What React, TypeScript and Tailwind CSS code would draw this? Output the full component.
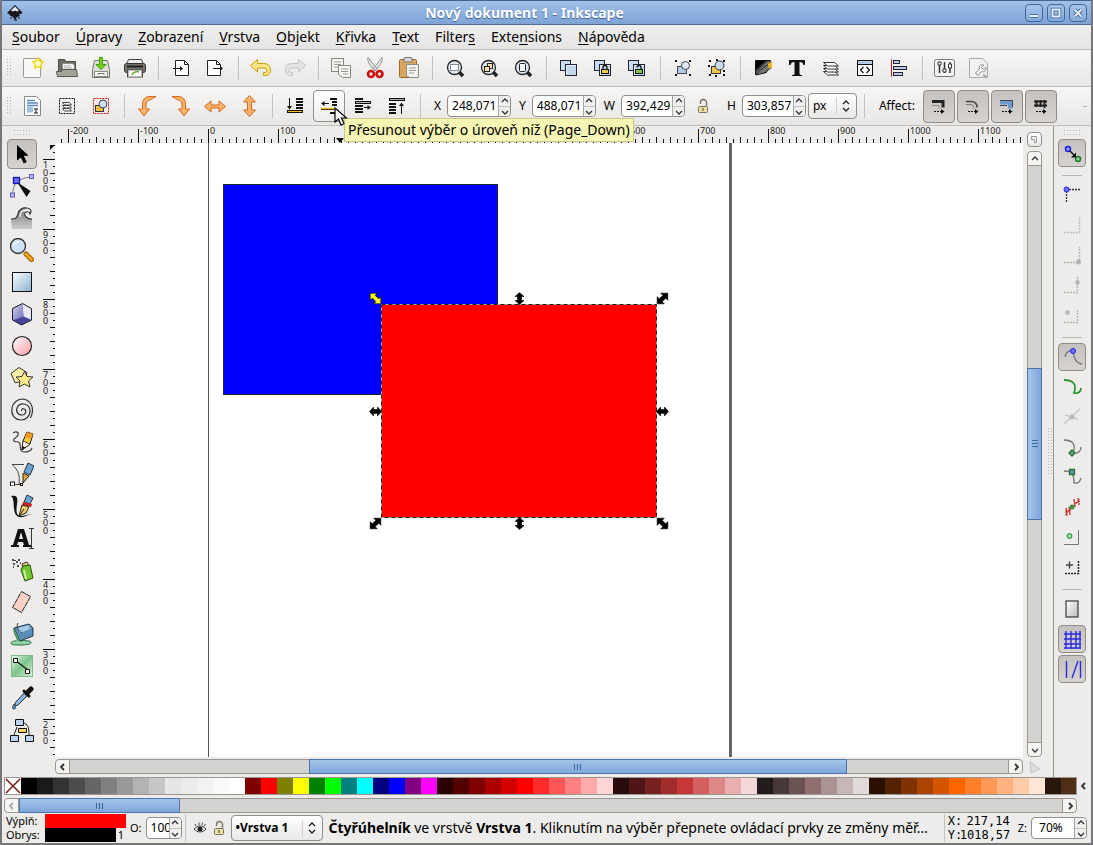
import type { ReactNode } from "react";
import clsx from "clsx";

const menus = [
  ["", "S", "oubor"],
  ["", "Ú", "pravy"],
  ["", "Z", "obrazení"],
  ["", "V", "rstva"],
  ["", "O", "bjekt"],
  ["", "K", "řivka"],
  ["", "T", "ext"],
  ["Filter", "s", ""],
  ["Exte", "n", "sions"],
  ["", "N", "ápověda"],
];

const palette = [
  "#000000", "#1a1a1a", "#333333", "#4d4d4d", "#666666", "#808080", "#999999",
  "#b3b3b3", "#c6c6c6", "#e6e6e6", "#ececec", "#f2f2f2", "#f9f9f9", "#ffffff",
  "#800000", "#ff0000", "#808000", "#ffff00", "#008000", "#00ff00", "#008080",
  "#00ffff", "#000080", "#0000ff", "#800080", "#ff00ff", "#2b0000", "#550000",
  "#800000", "#aa0000", "#d40000", "#ff0000", "#ff2a2a", "#ff5555", "#ff8080",
  "#ffaaaa", "#ffd5d5", "#280b0b", "#501616", "#782121", "#a02c2c", "#c83737",
  "#d35f5f", "#de8787", "#e9afaf", "#f4d7d7", "#241c1c", "#483737", "#6c5353",
  "#916f6f", "#ac9393", "#c8b7b7", "#e3dbdb", "#2b1100", "#552200", "#803300",
  "#aa4400", "#d45500", "#ff6600", "#ff7f2a", "#ff9955", "#ffb380", "#ffccaa",
  "#ffe6d5", "#28170b", "#502d16",
];

function Svg({ children }: { children: ReactNode }) {
  return (
    <svg width="24" height="24" viewBox="0 0 24 24" fill="none" className="shrink-0">
      {children}
    </svg>
  );
}

/* Shared bits that several icons are built from */
const Page = ({ x = 2 }: { x?: number }) => (
  <path d={`M${x + 0.5} 4.5h9l4 4v11h-13z M${x + 9.5} 4.5v4h4`} fill="#fdfdfd" stroke="#222" />
);

const Magnifier = () => (
  <>
    <path d="M16 16l4 4" stroke="#222" strokeWidth="3.5" />
    <circle cx="11.5" cy="11.5" r="7" fill="#dde8f4" stroke="#222" strokeWidth="1.3" />
  </>
);

const Squares = () => (
  <>
    <rect x="3.5" y="4.5" width="10" height="10" fill="#c9dcec" stroke="#223" />
    <rect x="8.5" y="8.5" width="11" height="11" fill="#c3d7ea" stroke="#223" />
    <path d="M9.5 18.5v-9h9" stroke="#eaf2f9" />
  </>
);

const Handles = () => (
  <path
    d="M4 4h2v2h-2zM18 4h2v2h-2zM4 18h2v2h-2zM18 18h2v2h-2z"
    fill="#111"
  />
);

const icons: Record<string, ReactNode> = {
  new: (
    <>
      <rect x="2.5" y="2.5" width="17" height="19" rx="1" fill="#f8f8f6" stroke="#999a96" />
      <path d="M17 2l1.7 3.2 3.6.6-2.5 2.6.5 3.7-3.3-1.6-3.3 1.6.5-3.7-2.5-2.6 3.6-.6z" fill="#fffbd0" stroke="#eed500" strokeWidth="1.3" />
    </>
  ),
  open: (
    <>
      <path d="M3.5 15V3.500h6l2 2h9V15" fill="#6b6c62" stroke="#4c4d45" />
      <path d="M7.500 7.500h10l2 2v7h-12z" fill="#f4f4f2" stroke="#8b8c86" />
      <path d="M9 10h7M9 12h8" stroke="#aaa" />
      <path d="M1.500 15.500h5l1-2h14l1 7h-20z" fill="#a3a498" stroke="#55564d" />
    </>
  ),
  save: (
    <>
      <path d="M5.500 4.500h13l2 9v8h-17v-8z" fill="#deded9" stroke="#777871" />
      <rect x="5.500" y="15.500" width="13" height="5" fill="#f7f7f5" stroke="#8d8e88" />
      <path d="M9 19v-1.500h6V19" stroke="#777" />
      <path d="M10.500 1.500h3v7h3.500l-5 5-5-5h3.500z" fill="#73d216" stroke="#429a06" />
    </>
  ),
  print: (
    <>
      <path d="M5.500 3.500h13l2 5h-17z" fill="#eee" stroke="#444" />
      <rect x="1.500" y="7.500" width="21" height="9" rx="2" fill="#74756e" stroke="#333" />
      <path d="M4 10.500h16" stroke="#222" strokeWidth="2" />
      <path d="M4 13.500h16v8h-16z" fill="#444" />
      <path d="M5.500 14.500h13v6h-13z" fill="#fff" stroke="#bbb" />
      <path d="M9 19c1-3 5-4 7-3" stroke="#6cae2c" strokeWidth="1.500" />
    </>
  ),
  import: (
    <>
      <Page x={6} />
      <path d="M4 12.500h8" stroke="#111" />
      <path d="M11 10l3 2.500-3 2.500z" fill="#111" />
    </>
  ),
  export: (
    <>
      <Page x={4} />
      <path d="M10 12.500h8" stroke="#111" />
      <path d="M17 10l3 2.500-3 2.500z" fill="#111" />
    </>
  ),
  undo: (
    <path d="M1.500 9.500l7-6v4h6c5 0 7 3 7 6.500 0 3-2 5-4 5.500h-3v-3c3 .5 3.500-1 3.500-2.500s-1-2-3.500-2h-6v4z" fill="#f7e68a" stroke="#c4a000" />
  ),
  redo: (
    <path d="M22.500 9.500l-7-6v4h-6c-5 0-7 3-7 6.500 0 3 2 5 4 5.500h3v-3c-3 .5-3.500-1-3.500-2.500s1-2 3.500-2h6v4z" fill="#e4e4e2" stroke="#c4c5c2" />
  ),
  copy: (
    <>
      <rect x="2.500" y="2.500" width="12" height="13" fill="#f3f3f1" stroke="#85867f" />
      <path d="M5 6h7M5 8.500h7M5 11h7" stroke="#9a9b96" />
      <path d="M9.500 9.500h12v12h-8l-4-3z" fill="#f3f3f1" stroke="#85867f" />
      <path d="M12 13h7M12 15.500h7M14 18h5" stroke="#9a9b96" />
    </>
  ),
  cut: (
    <>
      <path d="M5 1.500c-1 4 2 8 7 13l2-2C10 9 8 5 5 1.500zM19 1.500c1 4-2 8-7 13l-2-2C14 9 16 5 19 1.500z" fill="#e8e8e8" stroke="#7a7a7a" strokeWidth=".8" />
      <ellipse cx="8" cy="18" rx="3" ry="3" stroke="#cc0f0f" strokeWidth="2.600" />
      <ellipse cx="16.500" cy="18" rx="3" ry="3" stroke="#cc0f0f" strokeWidth="2.600" />
    </>
  ),
  paste: (
    <>
      <rect x="2.500" y="3.500" width="17" height="18" rx="1" fill="#d9a662" stroke="#9c6a2b" />
      <rect x="7" y="1.500" width="8" height="4.500" rx="1" fill="#d5d5d3" stroke="#777" />
      <path d="M9.500 8.500h12v13h-9l-3-2z" fill="#f3f3f1" stroke="#8c8d87" />
      <path d="M12 12h7M12 14.500h7M12 17h5" stroke="#9a9b96" />
    </>
  ),
  zoomSelection: (
    <>
      <Magnifier />
      <rect x="7.500" y="8.500" width="8" height="6" fill="#fff" stroke="#222" strokeDasharray="1 1" />
    </>
  ),
  zoomDrawing: (
    <>
      <Magnifier />
      <rect x="10.500" y="7.500" width="5" height="5" fill="#f6e3a5" stroke="#222" />
      <rect x="7.500" y="10.500" width="5" height="5" fill="#f6e3a5" stroke="#222" />
    </>
  ),
  zoomPage: (
    <>
      <Magnifier />
      <rect x="8.500" y="7.500" width="6" height="8" rx="1" fill="#f6f6f6" stroke="#222" />
    </>
  ),
  duplicate: <Squares />,
  clone: (
    <>
      <Squares />
      <path d="M12 13v-1.500a2 2 0 0 1 4 0V13" stroke="#111" strokeWidth="1.300" />
      <rect x="10.500" y="13.500" width="7" height="4" fill="#f4c94c" stroke="#111" />
    </>
  ),
  unlink: (
    <>
      <Squares />
      <path d="M12 11.500a2 2 0 0 1 4 0V14" stroke="#111" strokeWidth="1.300" />
      <rect x="10.500" y="13.500" width="7" height="4" fill="#7ec84f" stroke="#111" />
    </>
  ),
  group: (
    <>
      <rect x="6.500" y="10.500" width="9" height="7" fill="#b4cbe2" stroke="#445" />
      <circle cx="14.500" cy="9.500" r="4" fill="#dfe9f3" stroke="#445" />
      <Handles />
    </>
  ),
  ungroup: (
    <>
      <rect x="6.500" y="10.500" width="9" height="7" fill="#f3c74a" stroke="#333" />
      <circle cx="14.500" cy="9.500" r="4.500" fill="#c8daec" stroke="#333" />
      <path d="M4 4h2v2h-2zM18 4h2v2h-2zM4 18h2v2h-2zM18 18h2v2h-2zM3 9h2v2h-2zM11 3h2v2h-2zM18 14h2v2h-2zM10 19h2v2h-2z" fill="#111" />
    </>
  ),
  fill: (
    <>
      <defs>
        <linearGradient id="fillPage" x1="0" y1="0" x2="1" y2="1">
          <stop offset=".3" stopColor="#000" />
          <stop offset=".7" stopColor="#fff" />
        </linearGradient>
      </defs>
      <path d="M4.500 4.500h15l-4 12-11 2z" fill="url(#fillPage)" stroke="#111" />
      <path d="M5 19c2-3 3-4 6-6l9-7v6l-7 5z" fill="#777" stroke="#222" />
      <path d="M17 8l4-3v6l-3 2z" fill="#f5b51c" />
    </>
  ),
  text: (
    <path d="M4 4h16v5h-1.500c-.5-2-1.500-3-4-3v11.500c0 1.500 1 1.500 2.500 1.500v1H7v-1c1.500 0 2.500 0 2.500-1.500V6c-2.500 0-3.500 1-4 3H4z" fill="#111" />
  ),
  layers: (
    <>
      <path d="M4.500 15.500h11l4 3.500h-11z" fill="#fff" stroke="#333" />
      <path d="M4.500 12.500h11l4 3.500h-11z" fill="#fff" stroke="#333" />
      <path d="M4.500 9.500h11l4 3.500h-11z" fill="#fff" stroke="#333" />
      <path d="M4.500 6.500h11l4 3.500h-11z" fill="#fff" stroke="#333" />
    </>
  ),
  xml: (
    <>
      <rect x="4.500" y="4.500" width="15" height="15" fill="#fff" stroke="#111" />
      <path d="M5 6.500h14" stroke="#a8c4e2" strokeWidth="2.500" />
      <path d="M4 8.500h16" stroke="#111" />
      <path d="M10.500 11l-3 3 3 3M13.500 11l3 3-3 3" stroke="#111" strokeWidth="1.200" />
    </>
  ),
  align: (
    <>
      <path d="M4.500 3.500v17" stroke="#cc1515" />
      <rect x="6.500" y="4.500" width="6" height="3" fill="#b6cde3" stroke="#223" />
      <rect x="6.500" y="10.500" width="13" height="3" fill="#b6cde3" stroke="#223" />
      <rect x="6.500" y="16.500" width="9" height="3" fill="#b6cde3" stroke="#223" />
    </>
  ),
  preferences: (
    <>
      <rect x="1.500" y="3.500" width="20" height="17" rx="2" fill="#f3f3f1" stroke="#777" />
      <path d="M6.500 6v11M11.500 6v11M17 6v11" stroke="#333" strokeWidth="1.500" />
      <path d="M5 6h3v3H5zM10 13h3v3h-3zM15.500 8h3v4h-3z" fill="#fff" stroke="#333" />
    </>
  ),
  docPreferences: (
    <>
      <path d="M2.500 2.500h13l5 5v14h-18z" fill="#f0f0ee" stroke="#aaaba8" />
      <path d="M8.500 17l4-4c-1-3 1-5 4-4l-2 2.500 2 2 2.500-2c.5 3-1.500 5-4.500 4l-3.500 4z" fill="#fafafa" stroke="#888" />
      <path d="M16 19l4 2" stroke="#aaa" strokeWidth="2" />
    </>
  ),
  selectAll: (
    <>
      <path d="M3.500 2.500h12l4 4v15h-16z" fill="#fff" stroke="#8a8b86" />
      <path d="M6 6.500h8M6 9h11M6 11.500h11M6 14h4M6 16.500h4" stroke="#5a88bf" strokeWidth="1.600" />
      <path d="M6 12.500h6v6H6z" fill="#9fbfe0" />
      <path d="M13 15h4M15 15v4M13 19h4" stroke="#111" />
    </>
  ),
  selectLayers: (
    <>
      <rect x="4.500" y="4.500" width="15" height="15" stroke="#111" strokeDasharray="2 1" />
      <path d="M7.500 14.500h7l2 2.500h-7zM7.500 11.500h7l2 2.500h-7zM7.500 8.500h7l2 2.500h-7z" fill="#fff" stroke="#444" />
    </>
  ),
  deselect: (
    <>
      <rect x="4.500" y="4.500" width="15" height="15" stroke="#d01616" strokeDasharray="2 1" />
      <rect x="6.500" y="11.500" width="8" height="6" fill="#f4bd3b" stroke="#333" />
      <circle cx="14" cy="10" r="4" fill="#cfdeee" stroke="#445" />
    </>
  ),
  rotateLeft: (
    <path d="M21 2.500h-6c-5 0-7.500 3-7.500 8V15h-4l5.500 7 5.500-7h-3.500v-4c0-3 1.500-5 4-5z" fill="#fbb26a" stroke="#d2691e" />
  ),
  rotateRight: (
    <path d="M3 2.500h6c5 0 7.500 3 7.500 8V15h4l-5.500 7-5.500-7h3.500v-4c0-3-1.500-5-4-5z" fill="#fbb26a" stroke="#d2691e" />
  ),
  flipH: (
    <path d="M1.500 12.500l6.500-5.500v4h8v-4l6.500 5.500-6.500 5.500v-4h-8v4z" fill="#fbb26a" stroke="#d2691e" />
  ),
  flipV: (
    <path d="M12.500 1.500l-6 6.500h4v8h-4l6 6.500 6-6.500h-4v-8h4z" fill="#fbb26a" stroke="#d2691e" />
  ),
  toBottom: (
    <>
      <path d="M6.500 4v9" stroke="#111" />
      <path d="M4 12h5l-2.500 3.500z" fill="#111" />
      <path d="M13 5h7M13 8h7M13 11h7M13 14h7" stroke="#111" strokeWidth="2" />
      <path d="M4 17.500h16" stroke="#111" strokeWidth="3" />
      <path d="M5 17.500h14" stroke="#f3bd2e" />
    </>
  ),
  lower: (
    <>
      <path d="M6 9.500h6" stroke="#111" />
      <path d="M7.500 7v5l-3.500-2.500z" fill="#111" />
      <path d="M13 5h7M15 8h5M15 11h5M4 15h13M13 19h7" stroke="#111" strokeWidth="2" />
      <path d="M4 14.500h13" stroke="#f3bd2e" strokeWidth="1.500" />
    </>
  ),
  raise: (
    <>
      <path d="M4 5h8M4 12h8M4 15h8M4 18h8" stroke="#111" strokeWidth="2" />
      <path d="M4 8.500h16" stroke="#111" strokeWidth="3" />
      <path d="M5 8.500h14" stroke="#bbb" />
      <path d="M13 13.500h5" stroke="#111" />
      <path d="M16.500 11v5l3.500-2.500z" fill="#111" />
    </>
  ),
  toTop: (
    <>
      <path d="M4 5.500h16" stroke="#111" strokeWidth="3" />
      <path d="M5 5.500h14" stroke="#aaa" />
      <path d="M4 10h7M4 13h7M4 16h7M4 19h7" stroke="#111" strokeWidth="2" />
      <path d="M16.500 11v9" stroke="#111" />
      <path d="M14 12h5l-2.500-3.500z" fill="#111" />
    </>
  ),
  unlocked: (
    <>
      <path d="M9.500 10V8.500a3 3 0 0 1 6 0V12" stroke="#77735e" strokeWidth="1.400" />
      <rect x="7.500" y="12.500" width="9" height="6" rx="1" fill="#eee0a0" stroke="#77735e" />
      <path d="M12 14v3" stroke="#77735e" strokeWidth="1.500" />
    </>
  ),
  affectStroke: (
    <>
      <path d="M5 7.500h11v6" stroke="#222" strokeWidth="3" />
      <path d="M5 11.500h7v3" stroke="#888" />
      <path d="M7 17.500h7" stroke="#111" strokeDasharray="2 1" />
      <path d="M14 15v5l3.500-2.500z" fill="#111" />
    </>
  ),
  affectCorners: (
    <>
      <path d="M5 7.500h5c4 0 6 2 6 6" stroke="#444" strokeWidth="1.500" />
      <path d="M5 10.500h4c3 0 4 1 4 4" stroke="#777" />
      <path d="M7 17.500h7" stroke="#111" strokeDasharray="2 1" />
      <path d="M14 15v5l3.500-2.500z" fill="#111" />
    </>
  ),
  affectGradient: (
    <>
      <path d="M5 8.500h10v6" stroke="#6d9bd0" strokeWidth="4" />
      <path d="M5 6.500h12.500v7M5 11.500h7" stroke="#445" />
      <path d="M7 17.500h7" stroke="#111" strokeDasharray="2 1" />
      <path d="M14 15v5l3.500-2.500z" fill="#111" />
    </>
  ),
  affectPattern: (
    <>
      <path d="M5 7.500h13M5 11.500h13M7.500 6v7M11.500 6v7M15.500 6v8" stroke="#222" strokeWidth="2" />
      <path d="M7 17.500h7" stroke="#111" strokeDasharray="2 1" />
      <path d="M14 15v5l3.500-2.500z" fill="#111" />
    </>
  ),
  selector: <path d="M7 3v15.500l3.800-3 3 6 3-1.500-3-6 4.700-.5z" fill="#000" />,
  node: (
    <>
      <path d="M2.500 20C3 10 8 4 21 3" stroke="#777" />
      <rect x=".5" y="19" width="4" height="4" fill="#b8b8ff" stroke="#5a5ad8" />
      <rect x="19.500" y=".5" width="4" height="4" fill="#b8b8ff" stroke="#5a5ad8" />
      <rect x="3.500" y="3.500" width="6" height="6" fill="#6a6aff" stroke="#1414b8" strokeWidth="1.300" />
      <path d="M7 8l13.500 9-4 6z" fill="#111" />
    </>
  ),
  tweak: (
    <>
      <defs>
        <linearGradient id="waveFill" x1="0" y1="0" x2="0" y2="1">
          <stop stopColor="#777" />
          <stop offset="1" stopColor="#ccc" />
        </linearGradient>
      </defs>
      <path d="M1 13c5 0 6-1 7-5 1-5 5-7 9-6-4 3-5 10 5 11v10H2z" fill="url(#waveFill)" />
      <path d="M1 13c5 0 6-1 7-5 1-5 5-7 9-6 4 0 5 4 3 6 0-2-2-3-4-2-3 1-1 7 6 7" stroke="#333" strokeWidth="1.200" />
      <path d="M10 11c0-5 2-7 6-7 2 0 3 1 3 2" stroke="#eee" strokeWidth="1.300" />
    </>
  ),
  zoom: (
    <>
      <path d="M16 16l5.500 5.500" stroke="#a05a00" strokeWidth="5" strokeLinecap="round" />
      <path d="M16 16l5.500 5.500" stroke="#f5a81c" strokeWidth="3" strokeLinecap="round" />
      <circle cx="8" cy="8" r="7.500" fill="#cfe2f5" stroke="#333" strokeWidth="1.300" />
      <path d="M3 8c1-3 3-4 6-4" stroke="#fff" strokeWidth="1.500" />
    </>
  ),
  rect: (
    <>
      <defs>
        <linearGradient id="rectFill" x1="0" y1="0" x2="1" y2="1">
          <stop stopColor="#fbfdff" />
          <stop offset="1" stopColor="#8bb0d4" />
        </linearGradient>
      </defs>
      <rect x="2.500" y="2.500" width="19" height="19" fill="url(#rectFill)" stroke="#111" />
    </>
  ),
  box3d: (
    <>
      <defs>
        <linearGradient id="boxFill" x1="0" y1="0" x2="1" y2="1">
          <stop stopColor="#d5d5f5" />
          <stop offset="1" stopColor="#6a6ab8" />
        </linearGradient>
      </defs>
      <path d="M2.500 6.500l10-5 9 5v11.500l-10 5-9-5z" fill="#8686c4" />
      <path d="M12.500 2l9 5v11l-8-3.500z" fill="#e9e9fb" />
      <path d="M3 18l10.500-3.500 8 3.500-10 5z" fill="#4646a0" />
      <path d="M3 7l9.500-5 1 12.500L3 18z" fill="url(#boxFill)" />
      <path d="M2.500 6.500l10-5 9 5v11.500l-10 5-9-5z" stroke="#222" />
    </>
  ),
  ellipse: (
    <>
      <defs>
        <linearGradient id="ellipseFill" x1="0" y1="0" x2="1" y2="1">
          <stop stopColor="#fff" />
          <stop offset="1" stopColor="#ff9aa5" />
        </linearGradient>
      </defs>
      <circle cx="12" cy="12" r="9.500" fill="url(#ellipseFill)" stroke="#222" strokeWidth="1.200" />
    </>
  ),
  star: (
    <>
      <path d="M9 1.500l8 5-2 9-10 1-4-9z" fill="#fbf0a8" stroke="#333" />
      <path d="M14.500 5.500l2.500 5 6 .5-4.500 4 1.500 6-5.500-3-5.500 3 1-6-4-4 6-.5z" fill="#fdec84" stroke="#333" />
    </>
  ),
  spiral: (
    <path d="M12 13c-1-1 0-3 2-2 3 1 2 6-2 6-5 0-7-5-4-9 4-4 11-2 12 4 .5 6-4 10-9 10-7-.5-10-6-9-12C3 4 8 1 13 1c7 1 10 7 9.500 12 0 3-1 5-2 7" stroke="#333" strokeWidth="1.200" />
  ),
  pencil: (
    <>
      <path d="M3 3c3-2 6-1 5 2-1 3-6 4-4 6s5-1 6 3-1 7 4 8c4 0 7-1 8-4" stroke="#444" strokeWidth="1.200" />
      <path d="M12 20l1-9 4-9 6 2-3 10z" fill="#f8c93a" stroke="#222" />
      <path d="M17 2l6 2-2 5-6-2z" fill="#f39a1c" />
      <path d="M12 20l1-9 7 3z" fill="#fff6dd" stroke="#222" strokeWidth=".8" />
      <path d="M12 20l.5-4 3 1.500z" fill="#111" />
    </>
  ),
  pen: (
    <>
      <path d="M2 2.500h12M2 2.500c7 6 8 12 7 20M4 22.500h8" stroke="#444" />
      <rect x=".5" y="20" width="4" height="4" fill="#fff" stroke="#111" />
      <rect x="10.500" y="21.500" width="2" height="2" fill="#fff" stroke="#111" />
      <path d="M14 10l4-9 6 3-4 9z" fill="#6fa3d0" stroke="#234" />
      <path d="M13 11l6 3-6 7z" fill="#e6a83c" stroke="#222" />
    </>
  ),
  calligraphy: (
    <>
      <path d="M1 2c6-1 7 1 6 8s-1 12 4 12c4 0 7-2 11-2-4 0-7 4-13 3C1 21 6 5 1 2z" fill="#111" />
      <path d="M14 8l3-7 6 3-3 6z" fill="#6fa3d0" stroke="#234" />
      <path d="M13 8l9 2-1 3-9-2z" fill="#d02020" />
      <path d="M12 11l7 2-3 6-7 3z" fill="#f5cc60" stroke="#222" />
      <path d="M9 22l5-7" stroke="#222" />
    </>
  ),
  textTool: (
    <>
      <path d="M8 3h6l5 16h2v2h-8v-2h1l-1-3H8l-1 3h2v2H1v-2h2zM9 13h4l-2-7z" fill="#111" fillRule="evenodd" />
      <path d="M19 2.500h5M19 22.500h5M21.500 3v19" stroke="#333" />
    </>
  ),
  spray: (
    <>
      <path d="M2 2h2M6 4h2M3 6h2M8 2h2M7 8h2M3 9h1M10 5h1M5 2v1" stroke="#222" strokeWidth="1.600" />
      <path d="M12 6l5-2 2 4-6 2z" fill="#f0d080" stroke="#333" />
      <path d="M11 12l2-4 7-1 3 13-8 3z" fill="#73c832" stroke="#264e0a" />
      <path d="M14 12l2 9" stroke="#c9f09b" strokeWidth="2" />
    </>
  ),
  eraser: <path d="M11.500 1.500l9 5-9 16-9-5z" fill="#fbd3c6" stroke="#222" strokeDasharray="5 .5" />,
  bucket: (
    <>
      <path d="M1 21c0-2 5-2 6-3l3 0c1 1 10 0 11 2s-4 3-10 3S1 23 1 21z" fill="#8fd3a5" stroke="#2f6e44" />
      <path d="M4 10c0 4 2 5 3 9l2 0c0-5-2-6-1-10z" fill="#8fd3a5" />
      <path d="M4 6l15-4 4 4v8l-13 5z" fill="#5b8fb8" stroke="#1f3446" />
      <path d="M4 6l6 13-2-1-4-8z" fill="#8fd3a5" stroke="#2f6e44" />
      <path d="M7 6l12-3 1 4-10 4z" fill="#a8cbe6" />
      <path d="M12 11c-4-2-6-7-4-10" stroke="#333" />
    </>
  ),
  gradient: (
    <>
      <defs>
        <linearGradient id="gradFill" x1="0" y1="0" x2="1" y2="1">
          <stop stopColor="#eefaf0" />
          <stop offset=".5" stopColor="#7cc48a" />
          <stop offset="1" stopColor="#dff3e2" />
        </linearGradient>
      </defs>
      <rect x="1.500" y="1.500" width="21" height="21" fill="url(#gradFill)" stroke="#7cbd88" />
      <path d="M6 7l12 9" stroke="#111" strokeWidth="1.200" />
      <path d="M3.500 4.500h4v4h-4zM15.500 15.500h4v4h-4z" fill="#fff" stroke="#111" />
    </>
  ),
  dropper: (
    <>
      <path d="M15 6l3 3-10 10-3 1v-3z" fill="#8db6de" stroke="#234" />
      <path d="M14 5l5 5" stroke="#111" strokeWidth="3" strokeLinecap="round" />
      <path d="M17 7l4-4" stroke="#111" strokeWidth="5" strokeLinecap="round" />
      <path d="M4 18c-2 3-2 5 0 5s2-2 0-5z" fill="#5e93c8" stroke="#234" strokeWidth=".8" />
    </>
  ),
  connector: (
    <>
      <path d="M7 9L4 17M13 5c5 1 6 4 6 12" stroke="#222" />
      <path d="M5.500 1.500h8v6h-8zM.5 17.500h8v6h-8zM15.500 17.500h8v6h-8z" fill="#b9d3f0" stroke="#111" />
      <path d="M8.500 10.500h8v4h-8z" fill="#f8cf5c" stroke="#111" />
    </>
  ),
  snap: (
    <>
      <circle cx="8" cy="8" r="2.500" fill="#9b9bff" stroke="#2020e8" strokeWidth="1.500" />
      <circle cx="18" cy="18" r="2.500" fill="#9bcf9b" stroke="#1d7a2b" strokeWidth="1.500" />
      <path d="M10 10l4 4" stroke="#111" strokeWidth="1.500" />
      <path d="M16 11.500v5h-5z" fill="#111" />
    </>
  ),
  snapBox: (
    <>
      <path d="M6.500 8v12M6 6.500h14" stroke="#333" strokeWidth="1.300" strokeDasharray="2 1" />
      <circle cx="6.500" cy="6.500" r="2.500" fill="#7070ff" stroke="#2020e8" />
    </>
  ),
  snapEdge: <path d="M4 19.500h15.500V4" stroke="#c0bfbd" strokeWidth="1.300" strokeDasharray="2 1" />,
  snapCorner: (
    <>
      <path d="M4 19.500h15.500V4" stroke="#b4b3b1" strokeWidth="1.300" strokeDasharray="2 1" />
      <circle cx="18.500" cy="19" r="2.500" fill="#b4b3b1" />
    </>
  ),
  snapEdgeMid: (
    <>
      <path d="M4 19.500h13.500V4" stroke="#b4b3b1" strokeWidth="1.300" strokeDasharray="2 1" />
      <path d="M17.500 6l2.500 3.500-2.500 3.500-2.500-3.500z" fill="#b4b3b1" />
    </>
  ),
  snapCenter: (
    <>
      <path d="M4 19.500h13.500V6" stroke="#b4b3b1" strokeWidth="1.300" strokeDasharray="2 1" />
      <circle cx="7.500" cy="9.500" r="2.500" fill="#c0bfbd" />
    </>
  ),
  snapNodes: (
    <>
      <path d="M5 12c1-6 5-7 8-6 1 6 2 12 9 13" stroke="#777" strokeWidth="1.300" />
      <circle cx="13" cy="6" r="2.500" fill="#7070ff" stroke="#2020e8" />
    </>
  ),
  snapPath: <path d="M4 5c10 0 13 5 10 13 5 1 7-2 7-5" stroke="#2f9435" strokeWidth="1.800" />,
  snapIntersect: (
    <>
      <path d="M4 19L20 4M5 10l13 4" stroke="#c4c3c1" strokeWidth="1.300" />
      <circle cx="12" cy="12" r="2.500" fill="#bbb" />
    </>
  ),
  snapCusp: (
    <>
      <path d="M4 5c10 0 12 6 9 13 5 1 8-2 8-6" stroke="#777" strokeWidth="1.300" />
      <path d="M12 15l3 3-3 3-3-3z" fill="#6a9ba0" stroke="#1d7a2b" strokeWidth="1.300" />
    </>
  ),
  snapSmooth: (
    <>
      <path d="M4 6c8 0 10 3 10 12 5 1 6-2 7-5" stroke="#777" strokeWidth="1.300" />
      <path d="M9.500 4.500h5v5h-5z" fill="#6a8bb0" stroke="#1d7a2b" strokeWidth="1.300" />
    </>
  ),
  snapMid: (
    <>
      <path d="M5 20L20 4" stroke="#777" />
      <path d="M6 13l1 8M9 12l1 8M14 4l1 8M18 3l1 7M5 17l6-2M14 9l6-3" stroke="#dc2a2a" strokeWidth="1.300" />
      <circle cx="12" cy="12" r="2.500" fill="#3f9048" />
    </>
  ),
  snapObjCenter: (
    <>
      <path d="M4 19.500h14.500V5" stroke="#777" />
      <circle cx="9.500" cy="11" r="2.500" fill="#9bdb9b" stroke="#1d8a2b" />
    </>
  ),
  snapRotation: (
    <>
      <path d="M5 18.500h13.500V5" stroke="#222" strokeWidth="1.500" strokeDasharray="2 1" />
      <path d="M9.500 6.500v7M6 10h7" stroke="#444" strokeWidth="1.500" />
    </>
  ),
  snapPage: (
    <>
      <defs>
        <linearGradient id="pageFill" x1="0" y1="0" x2="1" y2="1">
          <stop stopColor="#fff" />
          <stop offset="1" stopColor="#bbb" />
        </linearGradient>
      </defs>
      <rect x="6" y="4" width="12" height="16" fill="url(#pageFill)" stroke="#444" strokeWidth="1.300" />
    </>
  ),
  grid: <path d="M4 7h17M4 12h17M4 17h17M4 21h17M6 4v18M11 4v18M16 4v18M20 4v18" stroke="#2a2ae0" strokeWidth="1.400" />,
  guides: <path d="M6.500 4v17M20.500 4v17M12 21l6-17" stroke="#2a2ae0" strokeWidth="1.400" />,
};

const toolbar = [
  "new", "open", "save", "print", "|", "import", "export", "|", "undo", "redo", "|",
  "copy", "cut", "paste", "|", "zoomSelection", "zoomDrawing", "zoomPage", "|",
  "duplicate", "clone", "unlink", "|", "group", "ungroup", "|",
  "fill", "text", "layers", "xml", "align", "|", "preferences", "docPreferences",
];

const selectorBar = [
  "selectAll", "selectLayers", "deselect", "|", "rotateLeft", "rotateRight",
  "flipH", "flipV", "|", "toBottom", "lower", "raise", "toTop", "|",
];

const tools = [
  "selector", "node", "tweak", "zoom", "rect", "box3d", "ellipse", "star", "spiral",
  "pencil", "pen", "calligraphy", "textTool", "spray", "eraser", "bucket", "gradient",
  "dropper", "connector",
];

const snaps = [
  "snap", "|", "snapBox", "snapEdge", "snapCorner", "snapEdgeMid", "snapCenter", "|",
  "snapNodes", "snapPath", "snapIntersect", "snapCusp", "snapSmooth", "snapMid",
  "snapObjCenter", "snapRotation", "|", "snapPage", "grid", "guides",
];
const activeSnaps = ["snap", "snapNodes", "grid", "guides"];

const pressed =
  "rounded border border-[#8f8d8a] bg-linear-to-b from-[#c4c1be] to-[#d6d3d1]";
const raised = "border border-[#8f8e8b] bg-linear-to-b from-white to-[#e9e8e6]";
const bar = "flex items-center border-b border-[#bfbebb] bg-linear-to-b from-[#f7f6f5] to-[#e8e7e5]";

function Divider() {
  return (
    <div className="flex h-6 w-3 shrink-0 justify-center">
      <div className="w-px bg-[#c3c2bf]" />
    </div>
  );
}

function Grip() {
  return (
    <svg width="6" height="18" className="mx-1 shrink-0">
      {[0, 3, 6, 9, 12, 15].map((y) => (
        <path key={y} d={`M1 ${y + 0.5}h1M4 ${y + 0.5}h1`} stroke="#b3b1ae" />
      ))}
    </svg>
  );
}

function ToolButton({ name }: { name: string }) {
  return (
    <button type="button" aria-label={name} className="flex h-8 w-[34px] shrink-0 items-center justify-center">
      <Svg>{icons[name]}</Svg>
    </button>
  );
}

function Chevron({ dir, faint }: { dir: "up" | "down" | "left" | "right"; faint?: boolean }) {
  const d = {
    up: "M2 6l3-3 3 3",
    down: "M2 4l3 3 3-3",
    left: "M6 2L3 5l3 3",
    right: "M4 2l3 3-3 3",
  }[dir];
  return (
    <svg width="10" height="10" viewBox="0 0 10 10" fill="none" className="shrink-0">
      <path d={d} stroke={faint ? "#aaa" : "#333"} strokeWidth={dir === "left" || dir === "right" ? 1.8 : 1.3} />
    </svg>
  );
}

function SpinBox({ id, value, className }: { id: string; value: string; className: string }) {
  return (
    <div className={clsx("flex h-[22px] shrink-0 overflow-hidden rounded border border-[#8f8e8b] bg-white", className)}>
      <input id={id} defaultValue={value} className="w-0 min-w-0 flex-1 pl-1 text-xs outline-none" />
      <div className="flex w-3 flex-col border-l border-[#a9a8a5] bg-[#f0efed]">
        <button type="button" aria-label={`${id} up`} className="flex flex-1 items-center justify-center border-b border-[#c3c2bf]">
          <Chevron dir="up" />
        </button>
        <button type="button" aria-label={`${id} down`} className="flex flex-1 items-center justify-center">
          <Chevron dir="down" />
        </button>
      </div>
    </div>
  );
}

function Dropdown({ label, value, className }: { label: string; value: string; className: string }) {
  return (
    <div className={clsx("relative h-[26px] shrink-0 rounded", raised, className)}>
      <select aria-label={label} className="block h-full w-full appearance-none pl-1 text-xs outline-none [font-weight:inherit]">
        <option>{value}</option>
      </select>
      <div className="pointer-events-none absolute inset-y-1 right-0 flex w-5 flex-col items-center justify-center border-l border-[#cfcecb]">
        <svg width="8" height="12" viewBox="0 0 8 12" fill="none" stroke="#222" strokeWidth="1.300">
          <path d="M1 4l3-3 3 3M1 8l3 3 3-3" />
        </svg>
      </div>
    </div>
  );
}

function HScroll({ className, thumb, offFirst }: { className?: string; thumb: ReactNode; offFirst?: boolean }) {
  return (
    <div className={clsx("flex h-[15px] rounded border border-[#98968f] bg-[#d4d3d1]", className)}>
      <button type="button" aria-label="scroll left" className="flex w-[14px] items-center justify-center rounded-l border-r border-[#98968f] bg-[#f5f4f3]">
        <Chevron dir="left" faint={offFirst} />
      </button>
      {thumb}
      <button type="button" aria-label="scroll right" className="flex w-[14px] items-center justify-center rounded-r border-l border-[#98968f] bg-[#f5f4f3]">
        <Chevron dir="right" />
      </button>
    </div>
  );
}

const thumbX =
  "-my-px flex items-center justify-center border border-[#4c76ab] bg-linear-to-b from-[#a5c4ea] to-[#7fa7da]";

function Ribs() {
  return (
    <svg width="8" height="6">
      <path d="M.5 0v6M3.500 0v6M6.500 0v6" stroke="#3d6599" />
    </svg>
  );
}

function TopRuler() {
  const ticks = Array.from({ length: 240 }, (_, i) => i - 21);
  return (
    <svg className="block h-[17px] w-full overflow-hidden">
      {ticks.map((i) => (
        <path
          key={i}
          d={`M${153.5 + i * 7} 17v${i % 10 === 0 ? -14 : i % 2 === 0 ? -6 : -4}`}
          stroke="#111"
        />
      ))}
      {ticks
        .filter((i) => i % 10 === 0 && i >= -20 && i <= 110)
        .map((i) => (
          <text key={i} x={155 + i * 7} y="8" fontSize="9" fill="#222">
            {i * 10}
          </text>
        ))}
      <path d="M281 12h8l-4 5z" fill="#111" />
    </svg>
  );
}

function SideRuler() {
  const ticks = Array.from({ length: 120 }, (_, i) => i - 2);
  return (
    <svg className="h-full w-[13px] shrink-0 overflow-hidden">
      {ticks.map((i) => (
        <path
          key={i}
          d={`M13 ${16.5 + i * 7}h${i % 10 === 0 ? -12 : i % 2 === 0 ? -5 : -2}`}
          stroke="#111"
        />
      ))}
      {ticks
        .filter((i) => i % 10 === 0 && i >= 0 && i <= 80)
        .map((i) =>
          String(1000 - i * 10)
            .split("")
            .map((digit, n) => (
              <text key={`${i}-${n}`} x="1" y={25 + i * 7 + n * 8} fontSize="9" fill="#222">
                {digit}
              </text>
            )),
        )}
      <path d="M8 2h5l-5 5z" fill="#111" />
    </svg>
  );
}

function ScaleHandle({ x, y, turn, fill = "#000" }: { x: number; y: number; turn: number; fill?: string }) {
  return (
    <path
      d={
        turn % 90
          ? "M-7.500 0l5-5v3h5v-3l5 5-5 5v-3h-5v3z"
          : "M-6 0l4-4.500v2.500h4v-2.500l4 4.500-4 4.500v-2.500h-4v2.500z"
      }
      transform={`translate(${x} ${y}) rotate(${turn})`}
      fill={fill}
      stroke="#000"
      strokeWidth=".6"
    />
  );
}

function Canvas() {
  return (
    <svg className="block h-full w-full bg-white">
      <path d="M153.500 0v2000" stroke="#555" />
      <path d="M675.500 0v2000" stroke="#666" strokeWidth="3" />
      <rect x="168.500" y="41.500" width="274" height="210" fill="#0000ff" stroke="#223" />
      <rect x="327" y="162" width="275" height="212" fill="#ff0000" />
      <rect x="326.500" y="161.500" width="275" height="213" stroke="#a9a9a9" fill="none" />
      <rect x="326.500" y="161.500" width="275" height="213" stroke="#222" strokeDasharray="4 3" fill="none" />
      <ScaleHandle x={320.5} y={155.5} turn={45} fill="#ffff00" />
      <ScaleHandle x={607.5} y={155.5} turn={135} />
      <ScaleHandle x={320.5} y={380.5} turn={135} />
      <ScaleHandle x={607.5} y={380.5} turn={45} />
      <ScaleHandle x={464.5} y={155.5} turn={90} />
      <ScaleHandle x={464.5} y={380.5} turn={90} />
      <ScaleHandle x={320.5} y={268.5} turn={0} />
      <ScaleHandle x={607.5} y={268.5} turn={0} />
    </svg>
  );
}

function TitleBar() {
  const glyphs = ["M4 11h8", "M4.500 4.500h7v7h-7z", "M4.500 4.500l7 7M11.500 4.500l-7 7"];
  return (
    <header className="flex h-[25px] shrink-0 items-center border-t border-b border-t-[#46638c] border-b-[#4f6d99] bg-linear-to-b from-[#9fc0ea] to-[#7fa4d4] px-1">
      <svg width="18" height="18" viewBox="0 0 18 18">
        <path d="M9 1l7 7c1 1.500-1 2-3 2l1 2-3 1-2 3-2-3-4-2 1-1c-3 0-3-1-2-2z" fill="#15171c" />
        <path d="M9 2.500l4 4-2 1-2-1-2 1-2-1z" fill="#e9eef5" />
        <path d="M4 14h2M12 14h2M8 16h3" stroke="#111" />
      </svg>
      <h1 className="flex-1 text-center text-sm leading-5 font-bold text-white [text-shadow:0_1px_1px_#3c5f93]">
        Nový dokument 1 - Inkscape
      </h1>
      <div className="flex gap-1">
        {glyphs.map((d, i) => (
          <button
            key={d}
            type="button"
            aria-label={["minimize", "maximize", "close"][i]}
            className="flex size-[18px] items-center justify-center rounded border border-[#41659a] bg-linear-to-b from-[#a6c5ec] to-[#86abd9]"
          >
            <svg width="16" height="16" viewBox="0 0 16 16" fill="none">
              <path d={d} stroke="#35598e" strokeWidth="3.500" />
              <path d={d} stroke="#e6effa" strokeWidth="2" />
            </svg>
          </button>
        ))}
      </div>
    </header>
  );
}

function Coordinate({ name, value }: { name: string; value: string }) {
  return (
    <div className="flex items-center gap-1.5">
      <label htmlFor={name} className="shrink-0 text-xs">
        {name}
      </label>
      <SpinBox id={name} value={value} className="w-16" />
    </div>
  );
}

function SelectorBar() {
  return (
    <div className={clsx(bar, "relative z-10 h-[39px] shrink-0")}>
      <Grip />
      {selectorBar.map((name, i) =>
        name === "|" ? (
          <Divider key={i} />
        ) : name === "lower" ? (
          <div key={i} className="relative flex w-[34px] shrink-0 justify-center">
            <button
              type="button"
              aria-describedby="tip"
              aria-label="lower"
              className="flex size-8 items-center justify-center rounded border border-[#8f8e8b] bg-linear-to-b from-white to-[#eeedec]"
            >
              <Svg>{icons.lower}</Svg>
            </button>
            <div
              id="tip"
              role="tooltip"
              className="absolute top-7 left-8 flex h-6 items-center border border-[#c9c98a] bg-[#f6f6b4] px-[3px] text-sm whitespace-nowrap"
            >
              Přesunout výběr o úroveň níž (Page_Down)
            </div>
            <svg width="14" height="20" viewBox="0 0 14 20" className="absolute top-[17px] left-[22px]">
              <path d="M1 1v14l3.500-3 2.500 6 3-1.500-2.500-5.500h5z" fill="#fff" stroke="#000" strokeWidth="1.200" />
            </svg>
          </div>
        ) : (
          <ToolButton key={i} name={name} />
        ),
      )}
      <div className="ml-2 flex items-center gap-2">
        <Coordinate name="X" value="248,071" />
        <Coordinate name="Y" value="488,071" />
        <Coordinate name="W" value="392,429" />
      </div>
      <button type="button" aria-label="lock ratio" className="mx-1.5">
        <Svg>{icons.unlocked}</Svg>
      </button>
      <div className="ml-1.5 flex items-center gap-0.5">
        <Coordinate name="H" value="303,857" />
        <Dropdown label="unit" value="px" className="w-[49px]" />
        <Divider />
      </div>
      <span className="mx-2 text-xs">Affect:</span>
      <div className="flex gap-0.5">
        {["affectStroke", "affectCorners", "affectGradient", "affectPattern"].map((name) => (
          <button key={name} type="button" aria-label={name} aria-pressed="true" className={clsx("flex h-[33px] w-8 items-center justify-center", pressed)}>
            <Svg>{icons[name]}</Svg>
          </button>
        ))}
      </div>
      <div className="mr-1 ml-auto h-px w-1 bg-[#b3b1ae]" />
    </div>
  );
}

function Workspace() {
  return (
    <div className="flex min-h-0 flex-1">
      <nav className="flex w-10 shrink-0 flex-col items-center">
        <svg width="17" height="6" className="mt-1 mb-[3px] shrink-0">
          <path d="M0 .5h17M0 4.500h17" stroke="#b3b1ae" strokeDasharray="1 2" />
        </svg>
        {tools.map((name, i) => (
          <button
            key={name}
            type="button"
            aria-label={name}
            className={clsx("mb-0.5 flex size-[30px] shrink-0 items-center justify-center", i === 0 && pressed)}
          >
            <Svg>{icons[name]}</Svg>
          </button>
        ))}
      </nav>

      <div className="flex min-w-0 flex-1 flex-col">
        <div className="pl-[13px]">
          <TopRuler />
        </div>
        <div className="flex min-h-0 flex-1">
          <SideRuler />
          <div className="min-w-0 flex-1 overflow-hidden">
            <Canvas />
          </div>
        </div>
        <HScroll
          className="mt-0.5 mb-[3px] ml-[13px]"
          thumb={
            <>
              <div className="flex-[240]" />
              <div className={clsx(thumbX, "flex-[537]")}><Ribs /></div>
              <div className="flex-[162]" />
            </>
          }
        />
      </div>

      <div className="flex w-[30px] shrink-0 items-stretch">
        <div className="ml-1 flex w-[15px] flex-col pt-1.5">
          <button type="button" aria-label="guides" className={clsx("flex h-[15px] items-center justify-center rounded", raised)}>
            <svg width="7" height="9" fill="none"><path d="M.5 1.500h5v6h-2v-3h-3z" stroke="#999" /></svg>
          </button>
          <div className="mt-1 flex flex-1 flex-col rounded border border-[#98968f] bg-[#d4d3d1]">
            <button type="button" aria-label="scroll up" className="flex h-[14px] items-center justify-center rounded-t border-b border-[#98968f] bg-[#f5f4f3]">
              <Chevron dir="up" />
            </button>
            <div className="flex-[203]" />
            <div className="-mx-px flex flex-[151] items-center justify-center border border-[#4c76ab] bg-linear-to-r from-[#a5c4ea] to-[#7fa7da]">
              <svg width="6" height="8"><path d="M0 .5h6M0 3.500h6M0 6.500h6" stroke="#3d6599" /></svg>
            </div>
            <div className="flex-[223]" />
            <button type="button" aria-label="scroll down" className="flex h-[14px] items-center justify-center rounded-b border-t border-[#98968f] bg-[#f5f4f3]">
              <Chevron dir="down" />
            </button>
          </div>
          <svg width="15" height="20" viewBox="0 0 15 20" className="shrink-0">
            <path d="M3 5l10 7-9 4z" fill="#dcdddb" stroke="#c3c6c1" />
          </svg>
        </div>
        <div className="ml-1.5 flex items-center">
          <svg width="5" height="48">
            <path d="M.5 0v48M3.500 0v48" stroke="#b3b1ae" strokeDasharray="1 2" />
          </svg>
        </div>
      </div>

      <div className="flex w-[38px] shrink-0 flex-col items-center border-l border-[#98968f] pr-px">
        <svg width="17" height="6" className="mt-1 mb-[3px] shrink-0">
          <path d="M0 .5h17M0 4.500h17" stroke="#b3b1ae" strokeDasharray="1 2" />
        </svg>
        {snaps.map((name, i) =>
          name === "|" ? (
            <div key={i} className="flex h-3 w-5 shrink-0 items-center">
              <div className="h-px w-full bg-[#b9b7b4]" />
            </div>
          ) : (
            <button
              key={i}
              type="button"
              aria-label={name}
              className={clsx("mb-0.5 flex size-7 shrink-0 items-center justify-center", activeSnaps.includes(name) && pressed)}
            >
              <Svg>{icons[name]}</Svg>
            </button>
          ),
        )}
      </div>
    </div>
  );
}

function StatusBar() {
  return (
    <footer className="flex h-[30px] shrink-0 items-center pl-1 text-xs">
      <div className="flex w-[39px] shrink-0 flex-col text-[11px] leading-[14px]">
        <span>Výplň:</span>
        <span>Obrys:</span>
      </div>
      <div className="flex w-[81px] shrink-0 flex-col">
        <div className="h-3.5 bg-[#ff0000]" />
        <div className="flex h-3.5">
          <div className="flex-1 bg-black" />
          <span className="w-2.5 text-center text-[11px] leading-[14px]">1</span>
        </div>
      </div>
      <label htmlFor="opacity" className="mx-1 shrink-0 text-[11px]">
        O:
      </label>
      <SpinBox id="opacity" value="100" className="w-9" />
      <div className="mx-[3px] h-7 w-px bg-[#c3c2bf]" />
      <button type="button" aria-label="layer visible" className="ml-1">
        <svg width="14" height="14" viewBox="0 0 14 14" fill="none">
          <path d="M1 8c3-4 9-4 12 0-3 4-9 4-12 0z" fill="#ddd" stroke="#444" />
          <circle cx="7" cy="8" r="2.500" fill="#222" />
          <path d="M3 5L2 3M6 4V1.500M9 4l.5-2.500M11 5l1.500-2" stroke="#444" />
        </svg>
      </button>
      <button type="button" aria-label="layer lock">
        <Svg>{icons.unlocked}</Svg>
      </button>
      <div className="flex font-bold">
        <Dropdown label="layer" value="•Vrstva 1" className="w-[92px]" />
      </div>
      <p className="ml-1.5 min-w-0 flex-1 overflow-hidden text-sm whitespace-nowrap">
        <b>Čtyřúhelník</b> ve vrstvě <b>Vrstva 1</b>. Kliknutím na výběr přepnete ovládací prvky ze změny měř…
      </p>
      <div className="mx-[3px] h-7 w-px shrink-0 bg-[#c3c2bf]" />
      <div className="grid shrink-0 grid-cols-[12px_50px] font-['DejaVu_Sans_Mono','Liberation_Mono',monospace] leading-[14px]">
        <span>X:</span>
        <span className="text-right">217,14</span>
        <span>Y:</span>
        <span className="text-right">1018,57</span>
      </div>
      <label htmlFor="zoom" className="mr-1 ml-2 shrink-0 text-[11px]">
        Z:
      </label>
      <SpinBox id="zoom" value=" 70%" className="mr-1 w-14" />
    </footer>
  );
}

export default function App() {
  return (
    <div className="flex h-screen w-full flex-col overflow-hidden border-r-2 border-b-2 border-l-2 border-[#77767a] bg-[#edecea] font-['Noto_Sans',sans-serif] text-black">
      <TitleBar />
      <ul className="flex h-[25px] shrink-0 items-center gap-4 border-b border-[#bfbebb] bg-linear-to-b from-[#f0efee] to-[#e5e4e2] pl-2.5 text-sm">
        {menus.map(([before, key, after]) => (
          <li key={key + after}>
            <button type="button">
              {before}
              <span className="underline underline-offset-2">{key}</span>
              {after}
            </button>
          </li>
        ))}
      </ul>
      <div className={clsx(bar, "h-[37px] shrink-0")}>
        <Grip />
        {toolbar.map((name, i) => (name === "|" ? <Divider key={i} /> : <ToolButton key={i} name={name} />))}
      </div>
      <SelectorBar />
      <Workspace />
      <div className="flex h-[18px] shrink-0 pl-0.5">
        <div className="flex min-w-0 flex-1 overflow-hidden border border-[#98968f]">
          <button type="button" aria-label="no colour" className="w-4 shrink-0 bg-white">
            <svg width="16" height="16">
              <path d="M1 1l14 14M15 1L1 15" stroke="#7a1818" strokeWidth="1.500" />
            </svg>
          </button>
          {palette.map((color, i) => (
            <button key={i} type="button" aria-label={color} className="w-4 shrink-0" style={{ backgroundColor: color }} />
          ))}
        </div>
        <button type="button" aria-label="palette menu" className="flex w-3.5 items-center justify-center">
          <Chevron dir="left" />
        </button>
      </div>
      <HScroll
        offFirst
        className="mt-[3px] mr-3.5 ml-0.5 shrink-0"
        thumb={
          <>
            <div className={clsx(thumbX, "w-[161px]")}><Ribs /></div>
            <div className="flex-1" />
          </>
        }
      />
      <StatusBar />
    </div>
  );
}
